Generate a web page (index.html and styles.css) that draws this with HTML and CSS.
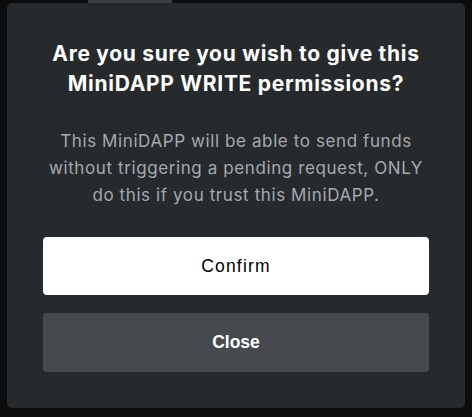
FILE: index.html
```html
<!DOCTYPE html>
<html>
<head>
<meta charset="utf-8">
<link rel="stylesheet" href="styles.css">
</head>
<body>
<div class="stage">
  <div class="behind"></div>
  <div class="modal">
    <h1 class="title">Are you sure you wish to give this MiniDAPP WRITE permissions?</h1>
    <p class="desc">This MiniDAPP will be able to send funds without triggering a pending request, ONLY do this if you trust this MiniDAPP.</p>
    <div class="actions">
      <button class="btn btn-confirm">Confirm</button>
      <button class="btn btn-close">Close</button>
    </div>
  </div>
</div>
</body>
</html>
```
FILE: styles.css
```css
* { box-sizing: border-box; }
html, body {
  margin: 0;
  padding: 0;
  background: #0c0c0c;
  width: 472px;
  height: 417px;
  overflow: hidden;
}
.stage {
  position: relative;
  padding: 3px 7px 0 7px;
}
.behind {
  position: absolute;
  top: 0;
  left: 88px;
  width: 84px;
  height: 6px;
  background: #3b3d42;
  border-radius: 0 0 4px 4px;
}
.modal {
  position: relative;
  width: 458px;
  height: 405px;
  background: #272a2d;
  border-radius: 5px;
  padding: 36px 36px 0 36px;
  text-align: center;
  font-family: "Inter", "Noto Sans", sans-serif;
}
.title {
  margin: 0;
  color: #ffffff;
  font-size: 21px;
  font-weight: 700;
  line-height: 30px;
  letter-spacing: 0.7px;
}
.desc {
  margin: 29px 0 0 0;
  color: #a4a9af;
  font-size: 17px;
  line-height: 26.8px;
  font-weight: 400;
  letter-spacing: 0.6px;
}
.actions {
  margin-top: 29px;
  display: flex;
  flex-direction: column;
  gap: 18px;
}
.btn {
  height: 58px;
  border: none;
  border-radius: 4px;
  font-family: "Liberation Sans", Arial, sans-serif;
  font-size: 17.5px;
  cursor: pointer;
}
.btn-confirm {
  background: #ffffff;
  color: #000000;
  letter-spacing: 1.2px;
}
.btn-close {
  background: #464a4e;
  color: #ffffff;
  font-weight: 700;
  height: 59px;
}
```
